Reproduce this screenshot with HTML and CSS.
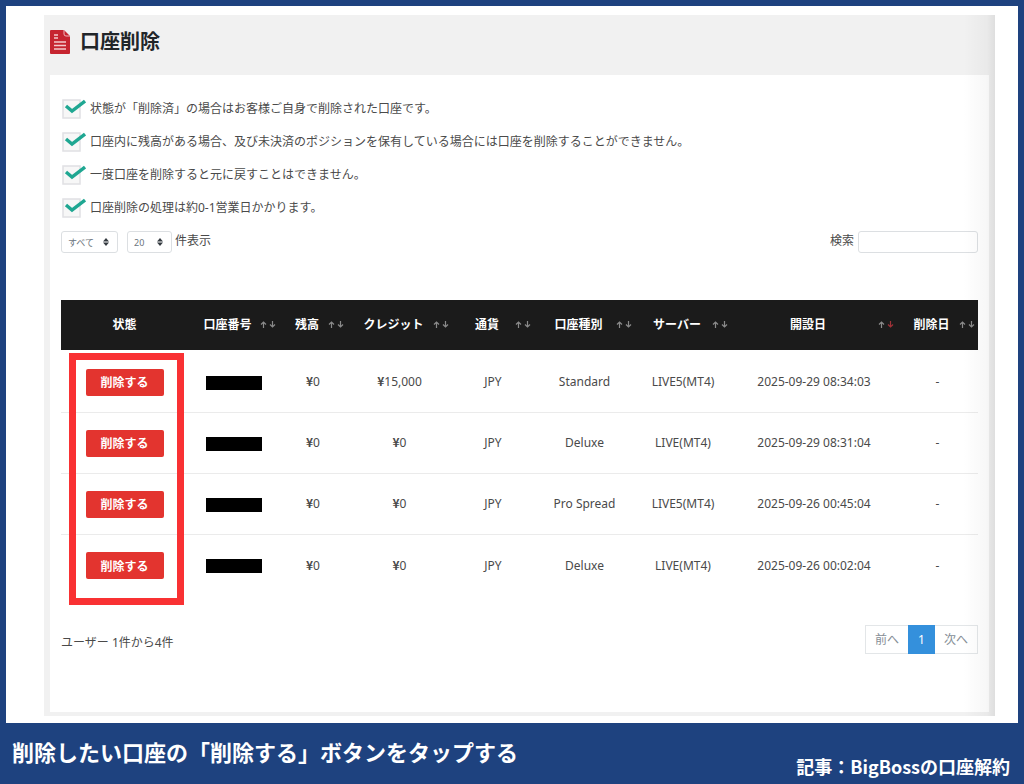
FILE: index.html
```html
<!DOCTYPE html>
<html lang="ja">
<head>
    <meta charset="UTF-8">
    <meta name="viewport" content="width=device-width, initial-scale=1.0">
    <title>口座削除</title>
    <link rel="stylesheet" href="styles.css">
</head>
<body>
    <svg class="symbols" width="0" height="0">
        <symbol id="check" viewBox="0 0 25 20">
            <rect x="2" y="1" width="17" height="18" fill="#f7f7f7" stroke="#e0e0e3" stroke-width="1.5"/>
            <path d="M5 7 L11 12 L24 2" fill="none" stroke="#1fa792" stroke-width="3.4"/>
        </symbol>
        <symbol id="updown" viewBox="0 0 6 8">
            <path d="M3 0 L6 3.4 H0 Z M3 8 L6 4.6 H0 Z" fill="#343a40"/>
        </symbol>
        <symbol id="sort-up" viewBox="0 0 7 7">
            <path d="M3.5 7 V1 M1 3.5 L3.5 1 L6 3.5" fill="none" stroke="currentColor" stroke-width="1.2"/>
        </symbol>
        <symbol id="sort-down" viewBox="0 0 7 7">
            <path d="M3.5 0 V6 M1 3.5 L3.5 6 L6 3.5" fill="none" stroke="currentColor" stroke-width="1.2"/>
        </symbol>
    </svg>
    <main class="container">
        <div class="screen">
            <header class="page-title">
                <svg class="title-icon" viewBox="0 0 20 24">
                    <path d="M1 0 H14 L20 6 V23 Q20 24 19 24 H1 Q0 24 0 23 V1 Q0 0 1 0 Z" fill="#c6242f"/>
                    <path d="M14 0 V4 Q14 6 16 6 H20" fill="none" stroke="#eeb5b9" stroke-width="1"/>
                    <path d="M4 5 H8 M4 8 H8 M4 12 H16 M4 15.5 H16 M4 19 H16" stroke="#f3c9cc" stroke-width="1.4"/>
                </svg>
                <h1>口座削除</h1>
            </header>
            <div class="card">
                <ul class="notes">
                    <li><svg class="check"><use href="#check"/></svg>状態が「削除済」の場合はお客様ご自身で削除された口座です。</li>
                    <li><svg class="check"><use href="#check"/></svg>口座内に残高がある場合、及び未決済のポジションを保有している場合には口座を削除することができません。</li>
                    <li><svg class="check"><use href="#check"/></svg>一度口座を削除すると元に戻すことはできません。</li>
                    <li><svg class="check"><use href="#check"/></svg>口座削除の処理は約0-1営業日かかります。</li>
                </ul>
                <form class="filters">
                    <span class="select-box">
                        <select class="status-select" name="status" aria-label="状態">
                            <option>すべて</option>
                        </select>
                        <svg class="updown"><use href="#updown"/></svg>
                    </span>
                    <span class="select-box">
                        <select class="length-select" id="length" name="length">
                            <option>20</option>
                        </select>
                        <svg class="updown"><use href="#updown"/></svg>
                    </span>
                    <label for="length">件表示</label>
                    <label class="search-label" for="search">検索</label>
                    <input type="search" id="search" name="search">
                </form>
                <div class="table-box">
                    <table>
                        <colgroup>
                            <col class="col-status">
                            <col class="col-number">
                            <col class="col-balance">
                            <col class="col-credit">
                            <col class="col-currency">
                            <col class="col-type">
                            <col class="col-server">
                            <col class="col-opened">
                            <col class="col-deleted">
                        </colgroup>
                        <thead>
                            <tr>
                                <th class="no-sort">状態</th>
                                <th>口座番号<span class="sort"><svg><use href="#sort-up"/></svg><svg><use href="#sort-down"/></svg></span></th>
                                <th>残高<span class="sort"><svg><use href="#sort-up"/></svg><svg><use href="#sort-down"/></svg></span></th>
                                <th>クレジット<span class="sort"><svg><use href="#sort-up"/></svg><svg><use href="#sort-down"/></svg></span></th>
                                <th>通貨<span class="sort"><svg><use href="#sort-up"/></svg><svg><use href="#sort-down"/></svg></span></th>
                                <th>口座種別<span class="sort"><svg><use href="#sort-up"/></svg><svg><use href="#sort-down"/></svg></span></th>
                                <th>サーバー<span class="sort"><svg><use href="#sort-up"/></svg><svg><use href="#sort-down"/></svg></span></th>
                                <th>開設日<span class="sort"><svg><use href="#sort-up"/></svg><svg class="sorted"><use href="#sort-down"/></svg></span></th>
                                <th>削除日<span class="sort"><svg><use href="#sort-up"/></svg><svg><use href="#sort-down"/></svg></span></th>
                            </tr>
                        </thead>
                        <tbody>
                            <tr>
                                <td><button type="button" class="delete">削除する</button></td>
                                <td><span class="masked"></span></td>
                                <td><span class="yen">¥</span>0</td>
                                <td><span class="yen">¥</span>15,000</td>
                                <td>JPY</td>
                                <td>Standard</td>
                                <td>LIVE5(MT4)</td>
                                <td>2025-09-29 08:34:03</td>
                                <td>-</td>
                            </tr>
                            <tr>
                                <td><button type="button" class="delete">削除する</button></td>
                                <td><span class="masked"></span></td>
                                <td><span class="yen">¥</span>0</td>
                                <td><span class="yen">¥</span>0</td>
                                <td>JPY</td>
                                <td>Deluxe</td>
                                <td>LIVE(MT4)</td>
                                <td>2025-09-29 08:31:04</td>
                                <td>-</td>
                            </tr>
                            <tr>
                                <td><button type="button" class="delete">削除する</button></td>
                                <td><span class="masked"></span></td>
                                <td><span class="yen">¥</span>0</td>
                                <td><span class="yen">¥</span>0</td>
                                <td>JPY</td>
                                <td>Pro Spread</td>
                                <td>LIVE5(MT4)</td>
                                <td>2025-09-26 00:45:04</td>
                                <td>-</td>
                            </tr>
                            <tr>
                                <td><button type="button" class="delete">削除する</button></td>
                                <td><span class="masked"></span></td>
                                <td><span class="yen">¥</span>0</td>
                                <td><span class="yen">¥</span>0</td>
                                <td>JPY</td>
                                <td>Deluxe</td>
                                <td>LIVE(MT4)</td>
                                <td>2025-09-26 00:02:04</td>
                                <td>-</td>
                            </tr>
                        </tbody>
                    </table>
                    <div class="highlight"></div>
                </div>
                <div class="table-footer">
                    <p>ユーザー 1件から4件</p>
                    <nav class="pages">
                        <a href="#">前へ</a>
                        <a href="#" class="active">1</a>
                        <a href="#">次へ</a>
                    </nav>
                </div>
            </div>
        </div>
    </main>
    <footer class="caption">
        <p class="caption-main">削除したい口座の「削除する」ボタンをタップする</p>
        <p class="caption-source">記事：BigBossの口座解約</p>
    </footer>
</body>
</html>
```
FILE: styles.css
```css
*{
    box-sizing: border-box;
}
body{
    margin:0;
    min-height:100vh;
    display: flex;
    flex-direction: column;
    background-color: #1e427f;
    color:#4a4a4a;
    font-family: "Noto Sans", "Noto Sans CJK JP", sans-serif;
    font-size:12px;
    line-height:18px;
}
h1, p, ul{
    margin:0;
    padding:0;
}
.symbols{
    position: absolute;
}
.container{
    flex:1;
    margin:6px 6px 0;
    padding:9px 23px 7px 38px;
    background-color: #fff;
}
.screen{
    position: relative;
    padding:0 6px 4px;
    background-color: #f1f1f1;
}
/* shade along the right edge */
.screen::after{
    content:"";
    position: absolute;
    top:0;
    right:0;
    bottom:0;
    width:32px;
    background: linear-gradient(to right, rgba(0,0,0,0), rgba(0,0,0,.03) 75%, rgba(0,0,0,.08));
    pointer-events: none;
}
.page-title{
    display: flex;
    align-items: center;
    gap:10px;
    height:60px;
    padding-bottom:6px;
}
.title-icon{
    width:20px;
    height:24px;
}
h1{
    color:#212529;
    font-size:20px;
    line-height:28px;
}
.card{
    padding:17px 11px 58px;
    background-color: #fff;
}
.notes{
    list-style: none;
}
.notes li{
    display: flex;
    align-items: center;
    gap:4px;
    height:33px;
}
.check{
    width:25px;
    height:20px;
}
.filters{
    display: flex;
    align-items: center;
    margin-top:7px;
}
.select-box{
    position: relative;
    margin-right:9px;
}
.select-box:nth-child(2){
    margin-right:3px;
}
select{
    appearance: none;
    display: block;
    height:22px;
    padding:0 6px;
    border:1px solid #dcdfe2;
    border-radius: 3px;
    background-color: #fff;
    color:#6c757d;
    font-family: inherit;
    font-size:9px;
}
.status-select{
    width:57px;
}
.length-select{
    width:45px;
}
.updown{
    position: absolute;
    top:7px;
    right:9px;
    width:6px;
    height:8px;
    pointer-events: none;
}
.filters label{
    padding-bottom:2px;
}
.search-label{
    margin-left:auto;
    margin-right:4px;
}
input{
    width:120px;
    height:22px;
    padding:0 6px;
    border:1px solid #dcdfe2;
    border-radius: 3px;
    background-color: #fff;
}
.table-box{
    position: relative;
    margin-top:47px;
}
table{
    width:100%;
    table-layout: fixed;
    border-collapse: separate;
    border-spacing: 0;
    text-align: center;
}
.col-status{
    width:127px;
}
.col-number{
    width:91px;
}
.col-balance{
    width:68px;
}
.col-credit{
    width:105px;
}
.col-currency{
    width:82px;
}
.col-type{
    width:101px;
}
.col-server{
    width:96px;
}
.col-opened{
    width:166px;
}
.col-deleted{
    width:81px;
}
thead th{
    position: relative;
    height:50px;
    padding:0 16px 0 4px;
    background-color: #1b1b1b;
    color:#fff;
    white-space: nowrap;
}
thead .no-sort{
    padding:0;
}
.sort{
    position: absolute;
    top:21px;
    right:3px;
    display: flex;
    gap:2px;
    color:#8a8a8a;
}
.sort svg{
    width:7px;
    height:7px;
}
.sort .sorted{
    color:#a03238;
}
td{
    height:61px;
    padding:0;
    border-bottom:1px solid #ebebeb;
    white-space: nowrap;
}
tbody tr:first-child td{
    height:63px;
    padding-top:2px;
}
tbody tr:last-child td{
    border-bottom: none;
}
.yen{
    font-family: "Noto Sans CJK JP", sans-serif;
    font-weight: bold;
    line-height:1;
}
.delete{
    width:78px;
    height:27px;
    padding:0;
    border:none;
    border-radius: 2px;
    background-color: #e3342f;
    color:#fff;
    font-family: inherit;
    font-size:12px;
    font-weight: bold;
}
.masked{
    display: inline-block;
    width:56px;
    height:14px;
    background-color: #000;
    vertical-align: middle;
}
.highlight{
    position: absolute;
    top:53px;
    left:8px;
    width:115px;
    height:252px;
    border:7px solid #f93133;
    pointer-events: none;
}
.table-footer{
    display: flex;
    justify-content: space-between;
    align-items: flex-end;
    margin-top:29px;
}
.pages{
    display: flex;
    border:1px solid #e3e6e8;
}
.pages a{
    padding:5px 9px 4px;
    color:#868e96;
    text-decoration: none;
}
.pages .active{
    margin:-1px 0;
    padding:6px 10px 5px;
    background-color: #3490dc;
    color:#fff;
}
.table-footer p{
    padding-bottom:2px;
}
.caption{
    display: flex;
    justify-content: space-between;
    align-items: flex-end;
    height:61px;
    padding:0 14px 5px 12px;
    color:#fff;
    font-family: "Noto Sans CJK JP", sans-serif;
    font-weight: bold;
}
.caption-main{
    align-self: center;
    font-size:22px;
    line-height:32px;
}
.caption-source{
    font-size:18px;
    line-height:26px;
}
```
